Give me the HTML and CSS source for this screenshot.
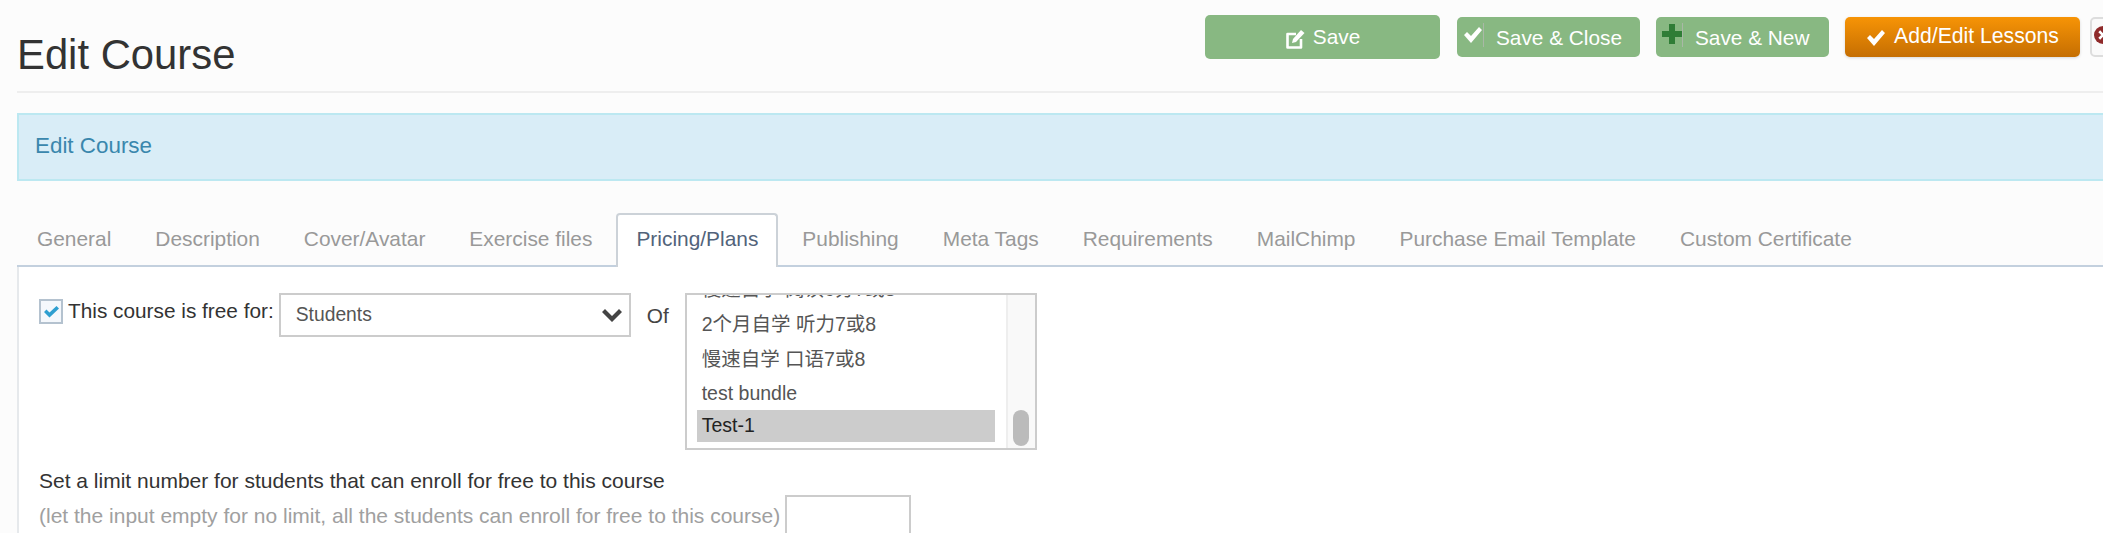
FILE: index.html
```html
<!DOCTYPE html>
<html>

<head>
  <meta charset="UTF-8"/>
  <title>Edit Course</title>
  <link rel="stylesheet" href="styles.css">
</head>

<body>
  <div class="page-head">
    <h1>Edit Course</h1>
    <div class="toolbar">
      <a class="btn btn-save">
        <svg class="ico-edit" viewBox="0 0 20 20"><path d="M11 5H2.500v13.500H16V10" fill="none" stroke="#fff" stroke-width="2.600" stroke-linejoin="round"/><path d="M7 14l1-4 8-9 3.500 3-8.500 9z" fill="#fff"/></svg>
        <span>Save</span>
      </a>
      <a class="btn btn-split btn-close-save">
        <span class="split-ico"><svg viewBox="0 0 20 20"><path d="M1 11l3-3 4 4 8-9 3 3-11 13z" fill="#fff"/></svg></span>
        <span class="split-text">Save &amp; Close</span>
      </a>
      <a class="btn btn-split btn-new">
        <span class="split-ico"><svg viewBox="0 0 20 20"><path d="M7 0h6v7h7v6h-7v7H7v-7H0V7h7z" fill="#2f7d36"/></svg></span>
        <span class="split-text">Save &amp; New</span>
      </a>
      <a class="btn btn-orange">
        <svg class="ico-check" viewBox="0 0 20 20"><path d="M1 11l3-3 4 4 8-9 3 3-11 13z" fill="#fff"/></svg>
        <span>Add/Edit Lessons</span>
      </a>
      <a class="btn-close"><svg viewBox="0 0 24 24"><circle cx="12" cy="12" r="12" fill="#8f2a2a"/><path d="M7 7l10 10M17 7l-10 10" stroke="#fff" stroke-width="3.500"/></svg></a>
    </div>
  </div>

  <div class="alert">Edit Course</div>

  <ul class="tabs">
    <li>General</li>
    <li>Description</li>
    <li>Cover/Avatar</li>
    <li>Exercise files</li>
    <li class="active">Pricing/Plans</li>
    <li>Publishing</li>
    <li>Meta Tags</li>
    <li>Requirements</li>
    <li>MailChimp</li>
    <li>Purchase Email Template</li>
    <li>Custom Certificate</li>
  </ul>

  <div class="tab-body">
    <div class="free-row">
      <span class="checkbox"><svg viewBox="0 0 15 12"><path d="M0 6l2.500-2.500 3 3 7-6.500 2.500 2.500-9.500 9z" fill="#2f9fd0"/></svg></span>
      <label class="free-label">This course is free for:</label>
      <div class="select">
        <span>Students</span>
        <svg viewBox="0 0 20 14"><path d="M3 1l7 7 7-7 3 3-10 10-10-10z" fill="#444"/></svg>
      </div>
      <span class="of">Of</span>
      <div class="listbox">
        <div class="options">
          <div class="option">慢速自学 阅读6分7或8</div>
          <div class="option">2个月自学 听力7或8</div>
          <div class="option">慢速自学 口语7或8</div>
          <div class="option short">test bundle</div>
          <div class="option selected">Test-1</div>
        </div>
        <div class="scroll-track"><div class="scroll-thumb"></div></div>
      </div>
    </div>
    <p class="limit-title">Set a limit number for students that can enroll for free to this course</p>
    <div class="limit-row">
      <span class="limit-hint">(let the input empty for no limit, all the students can enroll for free to this course)</span>
      <input class="limit-input" type="text">
    </div>
  </div>
</body>

</html>
```
FILE: styles.css
```css
html, body {
  width: 100%;
  height: 100%;
  margin: 0;
  padding: 0;
  overflow: hidden;
}
body {
  background-color: #fcfcfc;
  color: #333;
  font-family: "Liberation Sans", Arial, "Noto Sans CJK SC", sans-serif;
}

.page-head {
  display: flex;
  margin-left: 17px;
  height: 91px;
  border-bottom: 2px solid #eee;
}
h1 {
  margin: 31px 0 0;
  font-size: 41.8px;
  font-weight: normal;
  line-height: 48px;
  color: #333;
}

.toolbar {
  display: flex;
  flex: 0 0 auto;
  align-items: flex-start;
  gap: 16px;
  margin-left: auto;
  margin-right: -27px;
  padding-top: 15px;
}
.btn {
  display: flex;
  align-items: center;
  justify-content: center;
  box-sizing: border-box;
  height: 40px;
  margin-top: 2px;
  border-radius: 5px;
  background-color: #88b882;
  color: #fff;
  font-size: 20.8px;
}
.btn-save {
  width: 235px;
  height: 44px;
  margin-top: 0;
  margin-right: 1px;
  gap: 8px;
}
.ico-edit {
  width: 20px;
  height: 20px;
  margin-top: 3px;
}
.btn-split {
  align-items: flex-start;
  justify-content: flex-start;
}
.btn-close-save {
  width: 183px;
}
.btn-new {
  width: 173px;
}
.split-ico {
  display: flex;
  align-items: flex-start;
  box-sizing: content-box;
  width: 20px;
  height: 24px;
  margin: 6px 0 0 6px;
  border-right: 1px solid #a9b8a6;
}
.split-ico svg {
  width: 20px;
  height: 20px;
  margin-top: 1px;
}
.split-text {
  margin: 9px 0 0 12px;
  line-height: 24px;
  white-space: nowrap;
}
.btn-orange {
  width: 235px;
  gap: 8px;
  background: linear-gradient(#f79406, #c56e02);
  box-shadow: 0 1px 3px rgba(0, 0, 0, 0.15);
  font-size: 21.2px;
}
.btn-orange span {
  margin-top: -2px;
}
.ico-check {
  width: 20px;
  height: 20px;
}
.btn-close {
  display: block;
  flex: 0 0 auto;
  box-sizing: border-box;
  width: 40px;
  height: 40px;
  margin: 2px 0 0 -6px;
  padding: 7px 0 0 2px;
  border: 2px solid #ddd;
  border-radius: 5px;
  background-color: #fafafa;
}
.btn-close svg {
  display: block;
  width: 18px;
  height: 18px;
}

.alert {
  margin: 20px 0 0 17px;
  height: 68px;
  box-sizing: border-box;
  padding-left: 16px;
  border: 2px solid #bce8f1;
  border-right: 0;
  background-color: #d9edf7;
  color: #3a87ad;
  font-size: 22.4px;
  line-height: 61px;
}

.tabs {
  display: flex;
  margin: 32px 0 0 17px;
  padding: 0;
  list-style: none;
  height: 52px;
  border-bottom: 2px solid #c3d0de;
}
.tabs li {
  box-sizing: border-box;
  height: 54px;
  padding: 10px 20px 0;
  border: 2px solid transparent;
  border-bottom: 0;
  color: #999;
  font-size: 20.9px;
  line-height: 28px;
  white-space: nowrap;
}
.tabs li:first-child {
  padding-left: 18px;
}
.tabs li.active {
  margin: 0 2px;
  padding-left: 18px;
  padding-right: 18px;
  background-color: #fff;
  border-color: #ccd2d8;
  border-radius: 4px 4px 0 0;
  color: #52637a;
}

.tab-body {
  box-sizing: border-box;
  height: 267px;
  margin-left: 17px;
  padding: 26px 0 0 20px;
  border-left: 2px solid #e6e9ec;
  background-color: #fff;
  overflow: hidden;
}
.free-row {
  display: flex;
  align-items: flex-start;
}
.checkbox {
  display: flex;
  align-items: center;
  justify-content: center;
  box-sizing: border-box;
  width: 24px;
  height: 25px;
  margin-top: 6px;
  border: 2px solid #b4c2cf;
  background-color: #f5f8fc;
}
.checkbox svg {
  width: 15px;
  height: 12px;
}
.free-label {
  margin: 5px 5px 0 5px;
  font-size: 20.8px;
  line-height: 26px;
  white-space: nowrap;
}
.select {
  display: flex;
  flex: 0 0 auto;
  align-items: center;
  justify-content: space-between;
  box-sizing: border-box;
  width: 352px;
  height: 44px;
  padding: 0 7px 0 15px;
  border: 2px solid #ccc;
  color: #555;
  font-size: 19.3px;
}
.select svg {
  width: 20px;
  height: 14px;
}
.of {
  margin: 10px 16px 0 16px;
  font-size: 20.8px;
  line-height: 26px;
  color: #444;
}
.listbox {
  display: flex;
  flex: 0 0 auto;
  box-sizing: border-box;
  width: 352px;
  height: 157px;
  border: 2px solid #ccc;
  overflow: hidden;
}
.options {
  flex: 0 0 319px;
  display: flex;
  flex-direction: column;
  justify-content: flex-end;
  box-sizing: border-box;
  padding: 0 0 6px 10px;
  overflow: hidden;
}
.option {
  flex: 0 0 auto;
  box-sizing: border-box;
  width: 298px;
  height: 35px;
  padding-left: 5px;
  font-size: 19.5px;
  line-height: 35px;
  color: #555;
}
.option.short {
  height: 33px;
  line-height: 33px;
}
.option.selected {
  height: 32px;
  line-height: 31px;
  background-color: #ccc;
  color: #222;
}
.scroll-track {
  position: relative;
  flex: 1;
  border-left: 2px solid #eee;
  background-color: #f9f9f9;
}
.scroll-thumb {
  position: absolute;
  left: 5px;
  bottom: 2px;
  width: 16px;
  height: 36px;
  border-radius: 8px;
  background-color: #bbb;
}
.limit-title {
  margin: 16px 0 0;
  font-size: 21px;
  line-height: 30px;
  color: #333;
}
.limit-row {
  display: flex;
  align-items: flex-start;
  margin-top: -1px;
}
.limit-hint {
  margin-top: 7px;
  font-size: 21px;
  line-height: 28px;
  color: #a0a0a0;
  white-space: nowrap;
}
.limit-input {
  flex: 0 0 auto;
  box-sizing: border-box;
  width: 126px;
  height: 60px;
  margin-left: 5px;
  border: 2px solid #ccc;
  background-color: #fff;
}
```
